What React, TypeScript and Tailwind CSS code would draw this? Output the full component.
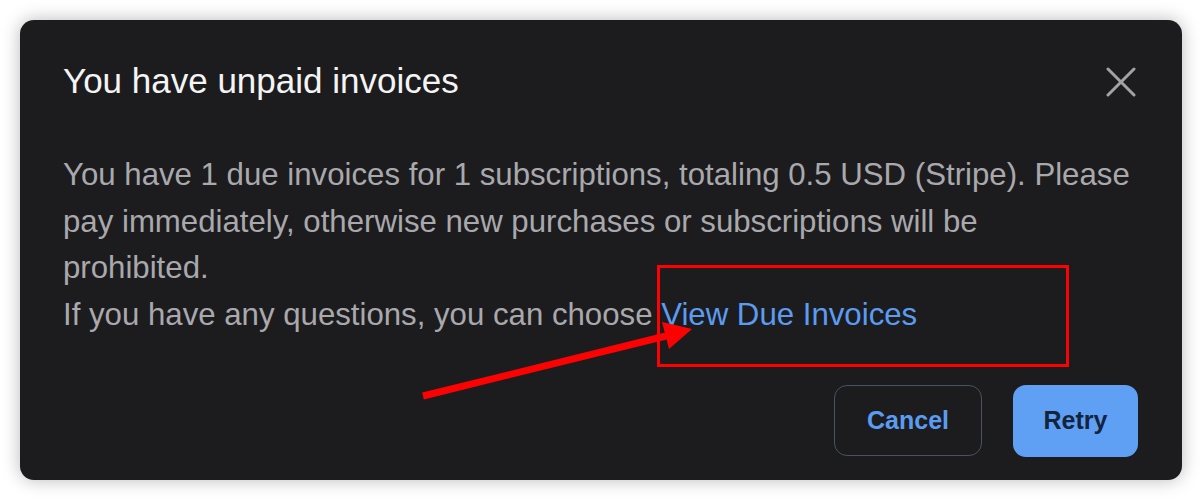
import { useState } from "react";

const CloseIcon = () => (
  <svg width="30" height="30" viewBox="0 0 30 30" fill="none">
    <path
      d="M2 2 28 28M28 2 2 28"
      stroke="currentColor"
      strokeWidth="3"
      strokeLinecap="round"
    />
  </svg>
);

const UnpaidInvoicesDialog = () => {
  const [open, setOpen] = useState(true);

  return (
    <div
      className="relative w-[1202px] h-[500px] bg-white p-[20px] overflow-hidden"
      style={{ fontFamily: '"Liberation Sans", Arial, sans-serif' }}
    >
      <div className="w-full h-full bg-[#1c1c1e] rounded-[14px] shadow-[0_0_18px_rgba(0,0,0,0.28)] flex flex-col pl-[43px] pr-[44px] pt-[40px] pb-[23px]">
        <div className="flex items-start justify-between">
          <h2 className="text-[35px] leading-[42px] text-[#f4f4f5] font-normal">
            You have unpaid invoices
          </h2>
          <button
            className="mt-[7px] mr-[2px] text-[#a3a3a6]"
            onClick={() => setOpen(!open)}
          >
            <CloseIcon />
          </button>
        </div>

        <div className="mt-[50px] text-[31.2px] leading-[46.5px] text-[#a9a9ad] whitespace-nowrap">
          <p>
            You have 1 due invoices for 1 subscriptions, totaling 0.5 USD
            (Stripe). Please
            <br />
            pay immediately, otherwise new purchases or subscriptions will be
            <br />
            prohibited.
          </p>
          <p>
            If you have any questions, you can choose{" "}
            <a className="text-[#5b9cf2] cursor-pointer">View Due Invoices</a>
          </p>
        </div>

        <div className="mt-auto flex justify-end gap-[31px]">
          <button className="w-[148px] h-[71px] rounded-[13px] border-[1.5px] border-[#4b5160] text-[#5b9cf2] text-[25px] font-bold">
            Cancel
          </button>
          <button className="w-[125px] h-[72px] rounded-[13px] bg-[#5fa0f4] text-[#13243f] text-[25px] font-bold">
            Retry
          </button>
        </div>
      </div>

      {/* annotation overlay */}
      <div className="absolute left-[657px] top-[265px] w-[412px] h-[102px] border-[3px] border-[#ff0000]" />
      <svg
        className="absolute left-0 top-0 pointer-events-none"
        width="1202"
        height="500"
        viewBox="0 0 1202 500"
      >
        <path d="M423 396 670 335" stroke="#ff0000" strokeWidth="7" />
        <path d="M692 329 662 322 669 349Z" fill="#ff0000" />
      </svg>
    </div>
  );
};

export default function App() {
  return <UnpaidInvoicesDialog />;
}
